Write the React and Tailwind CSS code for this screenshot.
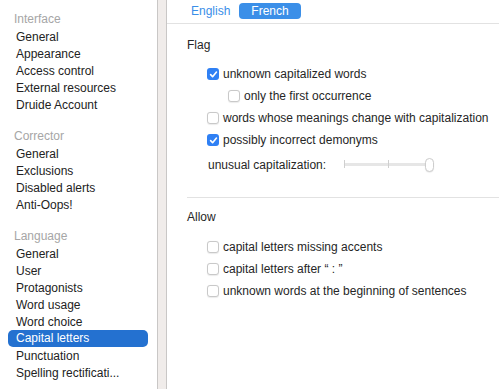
import React from "react";

const groups = [
  {
    title: "Interface",
    items: ["General", "Appearance", "Access control", "External resources", "Druide Account"],
  },
  {
    title: "Corrector",
    items: ["General", "Exclusions", "Disabled alerts", "Anti-Oops!"],
  },
  {
    title: "Language",
    items: [
      "General",
      "User",
      "Protagonists",
      "Word usage",
      "Word choice",
      "Capital letters",
      "Punctuation",
      "Spelling rectificati...",
    ],
  },
];

const Checkbox = ({ checked }) =>
  checked ? (
    <span className="w-[12px] h-[12px] rounded-[3px] bg-[#2f80f4] flex items-center justify-center shrink-0">
      <svg width="9" height="9" viewBox="0 0 10 10">
        <path d="M1.8 5.2 L4 7.4 L8.3 2.3" fill="none" stroke="#fff" strokeWidth="1.8" strokeLinecap="round" strokeLinejoin="round" />
      </svg>
    </span>
  ) : (
    <span className="w-[12px] h-[12px] rounded-[3px] bg-white border border-[#c9c9c9] shadow-[0_0.5px_1px_rgba(0,0,0,0.08)] shrink-0" />
  );

const Row = ({ checked, label, indent }) => (
  <div className={`flex items-center h-[22px] gap-[4px] ${indent ? "pl-[61px]" : "pl-[40px]"}`}>
    <Checkbox checked={checked} />
    <span>{label}</span>
  </div>
);

const Sidebar = () => (
  <div className="w-[158px] shrink-0 bg-white border-r border-[#c9c7c6] pt-[10px]">
    {groups.map((g, gi) => (
      <div key={g.title} className={gi > 0 ? "mt-[14px]" : ""}>
        <div className="h-[17px] leading-[18px] pl-[14px] mb-px text-[#a6a6a6]">{g.title}</div>
        {g.items.map((it) =>
          it === "Capital letters" ? (
            <div key={it} className="h-[17px] leading-[17px] ml-[8px] mr-[9px] pl-[8px] rounded-[5px] bg-[#2471d0] text-white">
              {it}
            </div>
          ) : (
            <div key={it} className="h-[17px] leading-[18px] pl-[16px] text-[#222]">
              {it}
            </div>
          )
        )}
      </div>
    ))}
  </div>
);

export default function App() {
  return (
    <div
      className="w-[499px] h-[389px] flex overflow-hidden bg-white text-[12px] text-[#262626]"
      style={{ fontFamily: '"Liberation Sans", Arial, sans-serif' }}
    >
      <Sidebar />
      <div className="w-[9px] shrink-0 bg-[#f0ecea] border-r border-[#c9c7c6]" />
      <div className="flex-1 flex flex-col">
        <div className="h-[24px] border-b border-[#e2e2e2] flex items-start pt-[3px] pl-[24px]">
          <span className="h-[16px] leading-[16px] text-[#3a8ee8]">English</span>
          <span className="ml-[9px] h-[16px] leading-[16px] px-[12px] rounded-[4px] bg-[#3b8fe8] text-white">
            French
          </span>
        </div>
        <div className="pt-[13px]">
          <div className="pl-[20px] h-[17px] leading-[17px]">Flag</div>
          <div className="mt-[9px]">
            <Row checked label="unknown capitalized words" />
            <Row indent label="only the first occurrence" />
            <Row label="words whose meanings change with capitalization" />
            <Row checked label="possibly incorrect demonyms" />
            <div className="flex items-center h-[27px] pl-[41px]">
              <span>unusual capitalization:</span>
              <div className="relative ml-[18px] w-[90px] h-[14px] flex items-center">
                <div className="w-[84px] h-[3px] bg-[#e6e6e6] rounded-full" />
                <div className="absolute left-0 top-[2px] w-px h-[8px] bg-[#cfcfcf]" />
                <div className="absolute left-[44px] top-[2px] w-px h-[8px] bg-[#cfcfcf]" />
                <div className="absolute left-[81px] top-0 w-[9px] h-[14px] rounded-full bg-white border border-[#cdcdcd] shadow-[0_0.5px_1px_rgba(0,0,0,0.12)]" />
              </div>
            </div>
          </div>
          <div className="ml-[20px] mt-[19px] border-t border-[#e2e2e2]" />
          <div className="pl-[20px] mt-[11px] h-[17px] leading-[17px]">Allow</div>
          <div className="mt-[10px]">
            <Row label="capital letters missing accents" />
            <Row label="capital letters after “ : ”" />
            <Row label="unknown words at the beginning of sentences" />
          </div>
        </div>
      </div>
    </div>
  );
}
